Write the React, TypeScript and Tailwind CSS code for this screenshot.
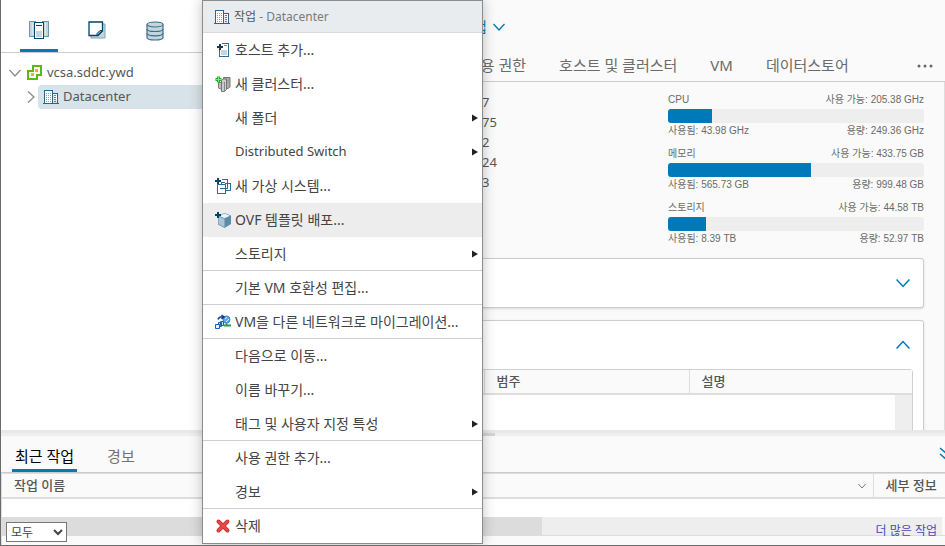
import type { ReactNode } from 'react'

const DatacenterIcon = () => (
  <svg width="16" height="16" viewBox="0 0 16 16" fill="none" stroke="#2b6684" shapeRendering="crispEdges" className="shrink-0">
    <path d="M1.5 14V1.5h8V14M9.5 4.500h5V14" fill="#fff" />
    <path d="M0 14.500h16" />
    <path d="M3 4.500h5M3 6.500h5M3 8.500h5M3 10.500h5M3 12.500h5" strokeDasharray="1 1" stroke="#7ea3b6" />
    <path d="M11 6.500h2M11 8.500h2M11 10.500h2M11 12.500h2" stroke="#55869f" />
  </svg>
)

const VcenterIcon = () => (
  <svg width="16" height="16" viewBox="0 0 16 16" fill="none" className="shrink-0">
    <path d="M6 1h8v9h-4v4H1V6h5z" fill="#fff" stroke="#5eb715" strokeWidth="2" />
    <path d="M8 4h3v3H8zM4 8h3v3H4z" fill="#fbab27" />
    <path d="M6 5v2M9 10h2" stroke="#5eb715" strokeWidth="2" />
  </svg>
)

const HostsIcon = () => (
  <svg width="20" height="20" viewBox="0 0 20 20" fill="none" shapeRendering="crispEdges">
    <path d="M.5 1.500h6v15h-6zM13.500 1.500h6v15h-6z" fill="#c5d5de" stroke="#6d96aa" />
    <path d="M5.500 2.500h9v16h-9z" fill="#fff" stroke="#004668" strokeWidth="1" />
    <path d="M7 5.500h6" stroke="#004668" />
    <path d="M7 11h6v6H7z" fill="#c5d5de" />
    <path d="M3.500 3v12M16.500 3v12" stroke="#dce7ed" />
  </svg>
)

const TemplatesIcon = () => (
  <svg width="18" height="18" viewBox="0 0 18 18" fill="none">
    <path d="M3 3h14v14H3z" fill="#c5d5de" stroke="#7fa2b4" />
    <path d="M1 1h13.500v9l-4.500 4.500H1z" fill="#fff" stroke="#004668" strokeWidth="1.300" />
    <path d="M14.500 9.500H12l-3 3v2.500z" fill="#7fa2b4" stroke="#004668" />
  </svg>
)

const StorageIcon = () => (
  <svg width="18" height="20" viewBox="0 0 18 20" fill="#c5d5de" stroke="#39708b" strokeWidth="1.200">
    <path d="M1 3.500v13c0 1.400 3.600 2.500 8 2.500s8-1.100 8-2.500v-13" />
    <path d="M1 8c0 1.400 3.600 2.500 8 2.500S17 9.400 17 8M1 12.300c0 1.400 3.600 2.500 8 2.500s8-1.100 8-2.500" fill="none" />
    <ellipse cx="9" cy="3.500" rx="8" ry="2.500" />
  </svg>
)

const AddHostIcon = () => (
  <svg width="16" height="16" viewBox="0 0 16 16" fill="none" shapeRendering="crispEdges">
    <path d="M7 1.500h6.500v13h-9V8" stroke="#2b6f93" />
    <path d="M6 8h6v5H6z" fill="#c5d5de" />
    <path d="M9 3.500h3" stroke="#6d96aa" />
    <path d="M5 2v6M2 5h6" stroke="#17394d" strokeWidth="2" />
  </svg>
)

const AddClusterIcon = () => (
  <svg width="16" height="16" viewBox="0 0 16 16" stroke="#777">
    <path d="M8.500 1.500h6.500v9.500l-2 1.500h-4z" fill="#aaa" />
    <path d="M3.500 6.500h4v6.500h-2l-2-1z" fill="#bbb" />
    <path d="M6.500 4.500l1.500-1.500h3.500v10.500l-2 2h-3z" fill="#ccc" />
    <path d="M9.500 6v9M7.500 7h1M12.500 4.500h1M12.500 6.500h1" fill="none" stroke="#888" />
    <path d="M3.500.500v6M.5 3.500h6" stroke="#22a82b" strokeWidth="3" />
    <path d="M3.500 1v5M1 3.500h5" stroke="#6df46a" />
  </svg>
)

const AddVmIcon = () => (
  <svg width="16" height="16" viewBox="0 0 16 16" fill="none" stroke="#2b6f93" shapeRendering="crispEdges">
    <path d="M7 1.500h5.500v9h-8M10 5.500h5.500v7h-5M2.500 6.500h8v9h-8z" />
    <path d="M6.500 6v-1.500H10" />
    <path d="M3 0v6M0 3h6" stroke="#004668" strokeWidth="2" />
  </svg>
)

const OvfIcon = () => (
  <svg width="16" height="16" viewBox="0 0 16 16">
    <path d="M9.500 1L16 3.500v8.500l-6.500 4L3 12.500V4z" fill="#5d8ca8" />
    <path d="M9.500 1.500l5.500 2.300-5.500 2.500L4.500 4z" fill="#e8f2f8" />
    <path d="M3.500 4.500l6 2.500v8.300l-6-3.300z" fill="#a9c6d8" />
    <path d="M3 0v6M0 3h6" stroke="#004668" strokeWidth="2" shapeRendering="crispEdges" />
  </svg>
)

const MigrateIcon = () => (
  <svg width="16" height="16" viewBox="0 0 16 16" fill="none" stroke="#1560b8">
    <circle cx="11.500" cy="5.500" r="3.500" fill="#66a9e4" stroke="#3a84cc" />
    <path d="M10 5l2-2M11 8l3-3" stroke="#d5ecff" />
    <path d="M9 11.500h7" stroke="#23a033" strokeWidth="2" />
    <path d="M11.500 9.500v1" stroke="#234" strokeWidth="2" />
    <path d="M5.500 7.500h3v4h-3zM3.500 8.500h3v4h-3z" fill="#bfe0fa" />
    <path d="M.5 10.500h4v4h-4z" fill="#e9f6ff" />
    <path d="M3 5.500c1-2.500 3-3 6-2.500M6.500 1l2.500 2-2.500 2" stroke="#0c3f8c" strokeWidth="1.500" />
  </svg>
)

const DeleteIcon = () => (
  <svg width="16" height="16" viewBox="0 0 16 16" fill="none" strokeLinecap="round">
    <path d="M3.500 3.500l9 9M12.500 3.500l-9 9" stroke="#c93434" strokeWidth="4" />
    <path d="M3.500 3.500l9 9M12.500 3.500l-9 9" stroke="#e84a4a" strokeWidth="2" />
  </svg>
)

const Chevron = ({ d, size = 'w-3 h-3', color = 'text-[#0079b8]' }: { d: string; size?: string; color?: string }) => (
  <svg viewBox="0 0 12 12" fill="none" stroke="currentColor" strokeWidth="1.300" className={`${size} ${color} shrink-0`}>
    <path d={d} />
  </svg>
)

const DOWN = 'M0.500 3l5.500 6 5.500-6'
const UP = 'M0.500 9l5.500-6 5.500 6'
const RIGHT = 'M3 0.500l6 5.500-6 5.500'

type MenuItem = { label: string; icon?: ReactNode; submenu?: boolean; active?: boolean }

const menuGroups: MenuItem[][] = [
  [
    { label: '호스트 추가...', icon: <AddHostIcon /> },
    { label: '새 클러스터...', icon: <AddClusterIcon /> },
    { label: '새 폴더', submenu: true },
    { label: 'Distributed Switch', submenu: true },
    { label: '새 가상 시스템...', icon: <AddVmIcon /> },
    { label: 'OVF 템플릿 배포...', icon: <OvfIcon />, active: true },
    { label: '스토리지', submenu: true },
  ],
  [{ label: '기본 VM 호환성 편집...' }],
  [{ label: 'VM을 다른 네트워크로 마이그레이션...', icon: <MigrateIcon /> }],
  [
    { label: '다음으로 이동...' },
    { label: '이름 바꾸기...' },
    { label: '태그 및 사용자 지정 특성', submenu: true },
  ],
  [{ label: '사용 권한 추가...' }, { label: '경보', submenu: true }],
  [{ label: '삭제', icon: <DeleteIcon /> }],
]

const usage = [
  { name: 'CPU', free: '205.38 GHz', used: '43.98 GHz', capacity: '249.36 GHz', percent: 17 },
  { name: '메모리', free: '433.75 GB', used: '565.73 GB', capacity: '999.48 GB', percent: 56 },
  { name: '스토리지', free: '44.58 TB', used: '8.39 TB', capacity: '52.97 TB', percent: 15 },
]

const counts = ['7', '75', '2', '24', '3']

function ContextMenu() {
  return (
    <div className="absolute left-[201px] top-0 z-10 w-[281px] border border-[#8c8c8c] bg-white pb-px shadow-[0_0_12px_rgba(0,0,0,0.25)]">
      <div className="flex h-8 items-center gap-1 border-b border-[#d8dcdf] bg-[#e9ecef] pl-[11px] text-xs text-[#7a7a7a]">
        <DatacenterIcon />
        <span><span className="text-[#565656]">작업</span> - Datacenter</span>
      </div>
      {menuGroups.map((group, i) => (
        <div key={i} className="border-b border-[#cfcfcf] last:border-b-0">
          {group.map((item, j) => (
            <button
              key={item.label}
              className={`flex w-full items-center gap-1 pl-3 pr-1 text-left text-[#444] hover:bg-[#eee] ${
                j === group.length - 1 ? 'h-[33px]' : 'h-[34px]'
              } ${/^[\x20-\x7e]+$/.test(item.label) ? 'text-[13px]' : 'text-sm'} ${item.active ? 'bg-[#ededed]' : ''}`}
            >
              <span className="flex w-4 shrink-0">{item.icon}</span>
              <span className="flex-1 whitespace-nowrap">{item.label}</span>
              {item.submenu && (
                <svg width="6" height="8" viewBox="0 0 6 8" fill="#222"><path d="M0 0.500l6 3.500-6 3.500z" /></svg>
              )}
            </button>
          ))}
        </div>
      ))}
    </div>
  )
}

function Sidebar() {
  return (
    <aside className="w-[440px] shrink-0 bg-white">
      <div className="flex h-[53px] items-end border-b border-[#ccc] pl-[19px]">
        <button aria-label="호스트 및 클러스터" className="flex h-9 w-[38px] justify-center border-b-[3px] border-[#0079b8] pt-1">
          <HostsIcon />
        </button>
        <button aria-label="VM 및 템플릿" className="ml-5 flex h-9 w-[38px] justify-center pt-[5px]"><TemplatesIcon /></button>
        <button aria-label="스토리지" className="ml-5 flex h-9 w-[38px] justify-center pt-[5px]"><StorageIcon /></button>
      </div>
      <div className="pt-2 text-[13px] text-[#565656]">
        <div className="flex h-6 items-center pl-2">
          <Chevron d={DOWN} color="text-[#8c8c8c]" />
          <span className="ml-[6px]"><VcenterIcon /></span>
          <span className="ml-1">vcsa.sddc.ywd</span>
        </div>
        <div className="flex h-6 items-center pl-6">
          <Chevron d={RIGHT} color="text-[#8c8c8c]" />
          <div className="ml-px flex h-6 flex-1 items-center gap-1 rounded-l bg-[#d8e3e9] pl-[5px]">
            <DatacenterIcon />
            Datacenter
          </div>
        </div>
      </div>
    </aside>
  )
}

function Summary() {
  return (
    <main className="flex min-w-0 flex-1 flex-col overflow-hidden bg-[#fafafa]">
      <div className="flex h-[50px] shrink-0 items-center pl-5 pt-1">
        <button className="flex items-center gap-[6px] text-sm text-[#0079b8]">
          작업
          <Chevron d={DOWN} />
        </button>
      </div>
      <nav className="flex h-8 shrink-0 items-center gap-[33px] whitespace-nowrap border-b border-[#ccc] pl-[26px] pr-3 text-[15px] text-[#6a6a6a]">
        <a href="#permissions">사용 권한</a>
        <a href="#hosts">호스트 및 클러스터</a>
        <a href="#vms">VM</a>
        <a href="#datastores">데이터스토어</a>
        <button aria-label="더 보기" className="ml-auto">
          <svg width="16" height="4" viewBox="0 0 16 4" fill="#666"><circle cx="2" cy="2" r="1.500" /><circle cx="8" cy="2" r="1.500" /><circle cx="14" cy="2" r="1.500" /></svg>
        </button>
      </nav>
      <div className="min-h-0 flex-1 border-r border-[#ddd] pr-5">
        <div className="flex justify-between pb-[11px] pt-[10px]">
          <ul className="pl-[41px] text-[13px] leading-5 text-[#565656]">
            {counts.map((count) => <li key={count}>{count}</li>)}
          </ul>
          <div className="flex w-64 flex-col gap-[7px] font-['Liberation_Sans','Noto_Sans_CJK_KR',sans-serif] text-[10px] leading-4 text-[#6a6a6a]">
            {usage.map((u) => (
              <div key={u.name}>
                <div className="flex justify-between"><span>{u.name}</span><span>사용 가능: {u.free}</span></div>
                <div className="mt-px h-[14px] overflow-hidden rounded-[3px] bg-[#eee]">
                  <div className="h-full bg-[#0079b8]" style={{ width: `${u.percent}%` }} />
                </div>
                <div className="flex justify-between"><span>사용됨: {u.used}</span><span>용량: {u.capacity}</span></div>
              </div>
            ))}
          </div>
        </div>
        <section className="flex h-[50px] items-center justify-end rounded-[3px] border border-[#ccc] bg-white pr-[13px] shadow-sm">
          <button aria-label="펼치기"><Chevron d={DOWN} size="w-[14px] h-[14px]" /></button>
        </section>
        <section className="mt-3 rounded-[3px] border border-[#ccc] bg-white pb-3 pr-[10px] shadow-sm">
          <div className="flex h-12 items-center justify-end pr-[3px]">
            <button aria-label="접기"><Chevron d={UP} size="w-[14px] h-[14px]" /></button>
          </div>
          <div className="rounded-t-[3px] border border-[#d0d0d0]">
            <table className="w-full table-fixed text-left text-[13px] text-[#565656]">
              <thead>
                <tr className="h-6 border-b-2 border-[#ddd] bg-[#fafafa]">
                  <th className="w-[41px]"></th>
                  <th className="w-[205px] border-l border-[#ddd] pl-3 font-medium">범주</th>
                  <th className="border-l border-[#ddd] pl-3 font-medium">설명</th>
                </tr>
              </thead>
            </table>
            <div className="ml-auto h-20 w-[17px] bg-[#eee]" />
          </div>
        </section>
      </div>
    </main>
  )
}

function TaskPanel() {
  return (
    <section className="relative shrink-0 bg-[#fafafa]">
      <div className="h-[3px] bg-[#e8e8e8]" />
      <div className="flex h-[3px] justify-center bg-[#eee]"><div className="w-11 bg-[#d4d4d4]" /></div>
      <div className="flex h-[37px] items-end border-b border-[#ccc] pl-[11px] text-[15px]">
        <button className="h-9 border-b-[3px] border-[#0079b8] px-[3px] pt-2 text-black">최근 작업</button>
        <button className="ml-[30px] h-9 border-b-[3px] border-transparent pt-2 text-[#737373]">경보</button>
        <button aria-label="모두 접기" className="-mr-2 ml-auto h-9 text-[#0079b8]">
          <svg width="14" height="14" viewBox="0 0 14 14" fill="none" stroke="currentColor" strokeWidth="1.500"><path d="M1 1l6 5 6-5M1 7l6 5 6-5" /></svg>
        </button>
      </div>
      <div className="border-l border-t border-[#ddd]">
        <table className="w-full table-fixed text-left text-[13px] text-[#565656]">
          <thead>
            <tr className="h-6 border-b-2 border-[#ddd]">
              <th className="pl-3 font-medium">
                <div className="flex items-center justify-between pr-[7px]">
                  작업 이름
                  <Chevron d={DOWN} size="w-2 h-2" color="text-[#666]" />
                </div>
              </th>
              <th className="w-[72px] whitespace-nowrap border-l border-[#ddd] pl-3 font-medium">세부 정보</th>
            </tr>
          </thead>
        </table>
        <div className="h-[18px] bg-white" />
        <div className="mr-[3px] h-[18px] bg-[#eee]"><div className="h-full w-[57.4%] bg-[#dcdcdc]" /></div>
        <div className="h-[10px] border-t border-[#ddd]" />
      </div>
      <div className="absolute inset-x-0 bottom-[3px] flex items-center justify-between pl-[5px] pr-2 text-xs">
        <select aria-label="작업 필터" className="h-5 w-[61px] border border-[#767676] bg-white text-[#444]">
          <option>모두</option>
        </select>
        <a href="#more" className="pb-[2px] text-[#4a4ab8]">더 많은 작업</a>
      </div>
    </section>
  )
}

export default function App() {
  return (
    <div className="relative flex h-screen flex-col overflow-hidden border-b border-l border-[#6b6b6b] bg-white font-['Noto_Sans','Noto_Sans_CJK_KR',sans-serif]">
      <div className="flex min-h-0 flex-1">
        <Sidebar />
        <Summary />
      </div>
      <TaskPanel />
      <ContextMenu />
    </div>
  )
}
